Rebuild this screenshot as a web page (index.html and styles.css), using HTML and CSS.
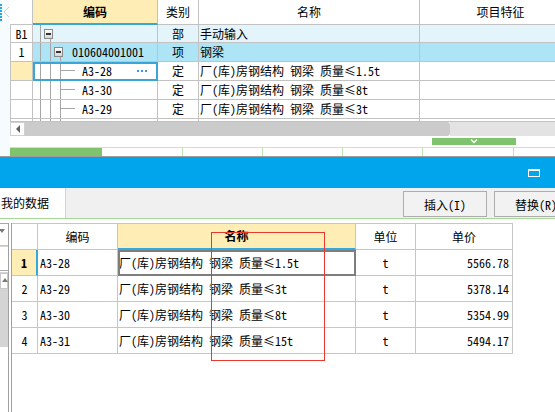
FILE: index.html
```html
<!DOCTYPE html>
<html lang="zh-CN">
<head>
<meta charset="utf-8">
<title>钢梁</title>
<link rel="stylesheet" href="styles.css">
</head>
<body>
<div class="app">
  <section class="top">
    <div class="side-strip">
      <svg class="notch" width="10" height="24" viewBox="0 0 10 24"><line x1="1" y1="4" x2="1" y2="21" stroke="#27a6de" stroke-width="2" stroke-dasharray="2 1"/><polyline points="9,7 4,12 9,17" fill="none" stroke="#cfcfcf"/></svg>
    </div>
    <div class="top-main">
      <div class="tgrid">
        <div class="trow thead">
          <div class="cell hnum"></div>
          <div class="cell hcode">编码</div>
          <div class="cell ctr">类别</div>
          <div class="cell ctr">名称</div>
          <div class="cell ctr">项目特征</div>
        </div>
        <div class="trow b1">
          <div class="cell num">B1</div>
          <div class="cell code lv0"><span class="tbox"></span></div>
          <div class="cell ctr">部</div>
          <div class="cell name">手动输入</div>
          <div class="cell"></div>
        </div>
        <div class="trow r1">
          <div class="cell num">1</div>
          <div class="cell code lv1"><span class="tbox"></span><span class="codetxt">010604001001</span></div>
          <div class="cell ctr">项</div>
          <div class="cell name">钢梁</div>
          <div class="cell"></div>
        </div>
        <div class="trow">
          <div class="cell num cur"></div>
          <div class="cell code lv2 selected">A3-28<svg class="more" width="10" height="2" viewBox="0 0 10 2"><rect x="0" y="0" width="2" height="2" fill="#3a9ad9"/><rect x="4" y="0" width="2" height="2" fill="#3a9ad9"/><rect x="8" y="0" width="2" height="2" fill="#3a9ad9"/></svg></div>
          <div class="cell ctr">定</div>
          <div class="cell name">厂(库)房钢结构 钢梁 质量≤1.5t</div>
          <div class="cell"></div>
        </div>
        <div class="trow">
          <div class="cell num"></div>
          <div class="cell code lv2">A3-30</div>
          <div class="cell ctr">定</div>
          <div class="cell name">厂(库)房钢结构 钢梁 质量≤8t</div>
          <div class="cell"></div>
        </div>
        <div class="trow">
          <div class="cell num"></div>
          <div class="cell code lv2">A3-29</div>
          <div class="cell ctr">定</div>
          <div class="cell name">厂(库)房钢结构 钢梁 质量≤3t</div>
          <div class="cell"></div>
        </div>
        <div class="trow partial">
          <div class="cell num"></div>
          <div class="cell code lv2"></div>
          <div class="cell"></div>
          <div class="cell"></div>
          <div class="cell"></div>
        </div>
      </div>
      <div class="hscroll">
        <div class="sb-btn"><span class="tri-left"></span></div>
        <div class="sb-thumb"></div>
        <div class="sb-track"></div>
      </div>
      <div class="splitter">
        <div class="handle"><svg width="8" height="5" viewBox="0 0 8 5"><polyline points="1,0.5 4,3.5 7,0.5" fill="none" stroke="#fff" stroke-width="1.4"/></svg></div>
      </div>
      <div class="tabstrip">
        <span class="seg on"></span>
        <span class="seg first"></span>
        <span class="seg"></span>
        <span class="seg"></span>
        <span class="seg"></span>
        <span class="seg wide"></span>
        <span class="seg rest"></span>
      </div>
    </div>
  </section>

  <header class="titlebar">
    <span class="restore"></span>
  </header>

  <div class="toolbar">
    <div class="tab">我的数据</div>
    <div class="actions">
      <button class="btn">插入(I)</button>
      <button class="btn">替换(R)</button>
    </div>
  </div>

  <section class="bottom">
    <aside class="lpanel">
      <div class="dd"><span class="tri-down"></span></div>
      <div class="box2"></div>
      <div class="vscroll"><div class="vbtn"><span class="tri-up"></span></div></div>
    </aside>
    <div class="lgap"></div>
    <div class="bwrap">
      <div class="bgrid">
        <div class="brow bhead">
          <div class="cell"></div>
          <div class="cell ctr">编码</div>
          <div class="cell ctr hname">名称</div>
          <div class="cell ctr">单位</div>
          <div class="cell ctr">单价</div>
        </div>
        <div class="brow">
          <div class="cell bnum cur">1</div>
          <div class="cell bcode">A3-28</div>
          <div class="cell bname selected2">厂(库)房钢结构 钢梁 质量≤1.5t</div>
          <div class="cell ctr">t</div>
          <div class="cell price">5566.78</div>
        </div>
        <div class="brow">
          <div class="cell bnum">2</div>
          <div class="cell bcode">A3-29</div>
          <div class="cell bname">厂(库)房钢结构 钢梁 质量≤3t</div>
          <div class="cell ctr">t</div>
          <div class="cell price">5378.14</div>
        </div>
        <div class="brow">
          <div class="cell bnum">3</div>
          <div class="cell bcode">A3-30</div>
          <div class="cell bname">厂(库)房钢结构 钢梁 质量≤8t</div>
          <div class="cell ctr">t</div>
          <div class="cell price">5354.99</div>
        </div>
        <div class="brow">
          <div class="cell bnum">4</div>
          <div class="cell bcode">A3-31</div>
          <div class="cell bname">厂(库)房钢结构 钢梁 质量≤15t</div>
          <div class="cell ctr">t</div>
          <div class="cell price">5494.17</div>
        </div>
      </div>
    </div>
    <div class="annot"></div>
  </section>
</div>
</body>
</html>
```

FILE: styles.css
```css
* { box-sizing: border-box; }
html, body { margin: 0; padding: 0; }
body {
  width: 555px;
  height: 412px;
  overflow: hidden;
  background: #fff;
  color: #000;
  font-family: "Noto Sans Mono CJK SC", "Noto Sans CJK SC", "Noto Sans", sans-serif;
  font-size: 12px;
  line-height: 1;
}

.app { display: flex; flex-direction: column; height: 412px; }

/* ---------- top grid section ---------- */
.top {
  flex: none;
  height: 157px;
  display: flex;
  border-bottom: 1px solid #9c9c9c;
}
.side-strip {
  flex: none;
  width: 10px;
  background: #f6fbfd;
  display: flex;
  flex-direction: column;
}
.notch { display: block; }
.top-main {
  flex: none;
  width: 545px;
  overflow: hidden;
  display: flex;
  flex-direction: column;
}
.tgrid { height: 122px; overflow: hidden; flex: none; }
.trow {
  display: grid;
  grid-template-columns: 23px 125px 41px 221px 162px;
  width: 572px;
  height: 19px;
}
.cell {
  border-right: 1px solid #c2c2c2;
  border-bottom: 1px solid #c2c2c2;
  display: flex;
  align-items: center;
  white-space: nowrap;
  overflow: hidden;
}
.ctr { justify-content: center; }
.thead { height: 25px; }
.thead .cell { justify-content: center; }
.hcode {
  background: #feeeb6;
  font-weight: bold;
  border-bottom: 2px solid #3aa6d8;
}
.trow.b1 { height: 18px; }
.trow.partial { height: 3px; }
.num { border-left: 1px solid #c2c2c2; justify-content: center; background: #fff; }
.num.cur { background: #feeeb6; }
.b1 .cell:not(.num) { background-color: #e3f5fb; }
.r1 .cell:not(.num) { background-color: #ade5f7; }
.name { padding-left: 1px; }

.code {
  --tl: #a6a6a6;
  background-repeat: no-repeat;
}
.code.lv0 {
  padding-left: 11px;
  background-image: linear-gradient(var(--tl), var(--tl)), linear-gradient(var(--tl), var(--tl));
  background-position: 7px 0, 17px 10px;
  background-size: 1px 100%, 1px 100%;
}
.code.lv1 {
  padding-left: 21px;
  background-image: linear-gradient(var(--tl), var(--tl)), linear-gradient(var(--tl), var(--tl)), linear-gradient(var(--tl), var(--tl));
  background-position: 7px 0, 17px 0, 27px 10px;
  background-size: 1px 100%, 1px 100%, 1px 100%;
}
.code.lv2 {
  padding-left: 49px;
  background-image: linear-gradient(var(--tl), var(--tl)), linear-gradient(var(--tl), var(--tl)), linear-gradient(var(--tl), var(--tl)), linear-gradient(var(--tl), var(--tl));
  background-position: 7px 0, 17px 0, 27px 0, 27px 8px;
  background-size: 1px 100%, 1px 100%, 1px 100%, 15px 1px;
}
.codetxt { margin-left: 9px; }
.tbox {
  flex: none;
  width: 9px;
  height: 10px;
  border: 1px solid #8a8a8a;
  background: linear-gradient(#ffffff, #d6d6d6);
  display: flex;
  align-items: center;
  justify-content: center;
}
.tbox::before {
  content: "";
  width: 5px;
  height: 2px;
  background: #333;
}
.selected {
  outline: 2px solid #3aa6d8;
  outline-offset: -2px;
}
.more { margin-left: auto; margin-right: 10px; display: block; }

/* horizontal scrollbar */
.hscroll { flex: none; height: 14px; display: flex; }
.sb-btn {
  flex: none;
  width: 15px;
  background: #fff;
  border: 1px solid #d0d0d0;
  display: flex;
  align-items: center;
  justify-content: center;
}
.tri-left {
  width: 0; height: 0;
  border-top: 4px solid transparent;
  border-bottom: 4px solid transparent;
  border-right: 4px solid #606060;
}
.sb-thumb {
  flex: none;
  width: 425px;
  background: #cbcbcb;
  border-radius: 0 3px 3px 0;
}
.sb-track { flex: 1; background: #e3e3e3; }

.splitter { flex: none; height: 11px; padding-top: 2px; }
.handle {
  width: 84px;
  height: 7px;
  margin-left: 422px;
  background: #7fc46c;
  display: flex;
  justify-content: center;
  align-items: flex-start;
  padding-top: 1px;
}
.handle svg { display: block; }

.tabstrip {
  flex: none;
  height: 9px;
  display: flex;
  border-top: 1px solid #c5e7b7;
}
.seg { flex: none; width: 80px; border-left: 1px solid #bde2ae; }
.seg.on { width: 92px; background: #7fc46c; border-left: none; }
.seg.first { border-left: none; }
.seg.wide { width: 91px; }
.seg.rest { flex: 1; }

/* ---------- title bar ---------- */
.titlebar {
  flex: none;
  height: 31px;
  background: #00a5ec;
  display: flex;
  align-items: center;
  justify-content: flex-end;
  padding-right: 15px;
}
.restore {
  width: 12px;
  height: 8px;
  border: 1px solid #fff;
  border-top-width: 2px;
  margin-top: 1px;
}

/* ---------- toolbar ---------- */
.toolbar {
  flex: none;
  height: 31px;
  display: flex;
  background: #f0f0f0;
  border-bottom: 1px solid #a6d995;
  overflow: hidden;
}
.tab {
  flex: none;
  width: 66px;
  background: #fff;
  border-right: 1px solid #bfe3b1;
  display: flex;
  align-items: center;
  padding-left: 1px;
  font-size: 12px;
}
.actions {
  flex: none;
  display: flex;
  gap: 7px;
  margin-left: 337px;
  padding-top: 3px;
}
.btn {
  flex: none;
  width: 84px;
  height: 26px;
  border: 1px solid #adadad;
  background: #f2f2f2;
  font-family: inherit;
  font-size: 12px;
  color: #000;
  padding: 0;
  display: flex;
  align-items: center;
  justify-content: center;
}

/* ---------- bottom grid ---------- */
.bottom {
  flex: 1;
  position: relative;
  display: flex;
  padding-top: 4px;
}
.lpanel {
  flex: none;
  width: 9px;
  border-top: 1px solid #a8a8a8;
  border-right: 1px solid #a0a0a0;
  display: flex;
  flex-direction: column;
}
.dd {
  height: 22px;
  border-bottom: 1px solid #c6c6c6;
  padding-top: 5px;
}
.tri-down {
  display: block;
  width: 0; height: 0;
  margin-left: -1px;
  border-left: 3px solid transparent;
  border-right: 3px solid transparent;
  border-top: 4px solid #7a7a7a;
}
.box2 { height: 25px; border-bottom: 1px solid #a8a8a8; border-top: 1px solid #d8d8d8; }
.vscroll {
  height: 75px;
  margin-top: 1px;
  background: #d4d4d4;
  padding-top: 1px;
}
.vbtn {
  height: 16px;
  background: #fff;
  border: 1px solid #c8c8c8;
  padding-top: 4px;
  padding-left: 1px;
}
.tri-up {
  display: block;
  width: 0; height: 0;
  border-left: 3px solid transparent;
  border-right: 3px solid transparent;
  border-bottom: 4px solid #7a7a7a;
}
.lgap { flex: none; width: 2px; }
.bwrap {
  flex: 1;
  border-left: 1px solid #a0a0a0;
}
.bgrid { width: 501px; }
.brow {
  display: grid;
  grid-template-columns: 26px 80px 238px 60px 97px;
  height: 26px;
}
.brow .cell { border-color: #c6c6c6; }
.bhead { height: 27px; border-top: 1px solid #c6c6c6; }
.bhead .hname {
  background: #feedb5;
  font-weight: bold;
  border-bottom: 2px solid #36a9dc;
}
.bnum { justify-content: center; }
.bnum.cur {
  background: #feedb5;
  font-weight: bold;
  border-right: 2px solid #34a8dc;
}
.bcode { padding-left: 2px; }
.bname { padding-left: 1px; }
.selected2 {
  outline: 2px solid #7d7d7d;
  outline-offset: -2px;
}
.price { justify-content: flex-end; padding-right: 3px; }

.annot {
  position: absolute;
  left: 211px;
  top: 13px;
  width: 114px;
  height: 129px;
  border: 1px solid #e8392f;
  pointer-events: none;
}
```
